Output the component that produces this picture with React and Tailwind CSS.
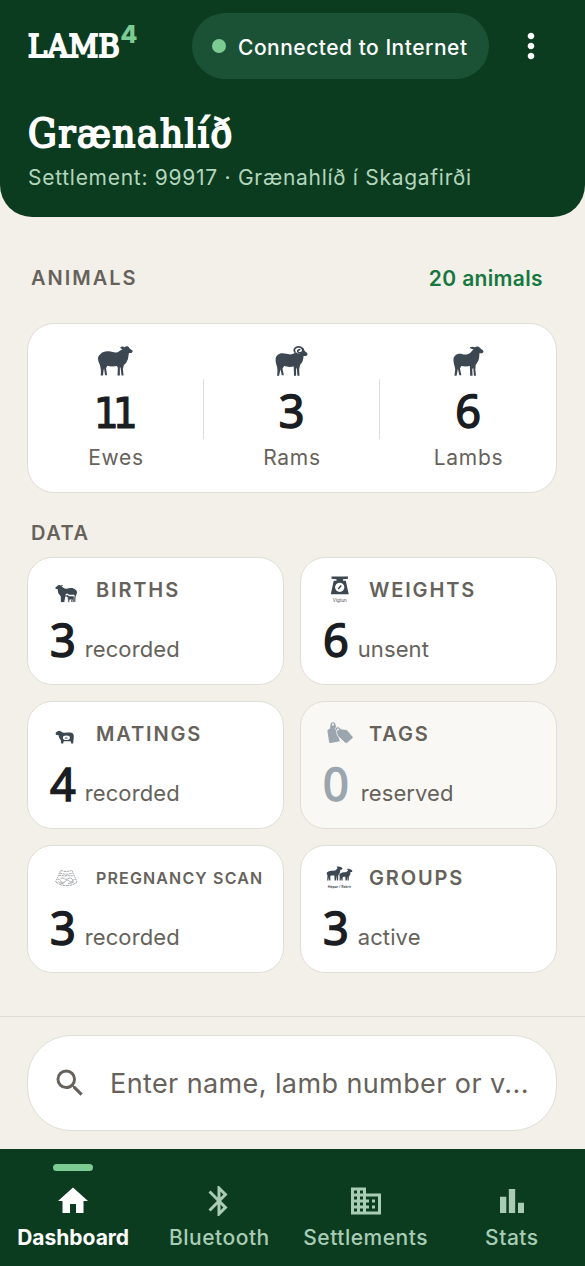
import { MdBluetooth, MdBusiness, MdHome, MdMoreVert, MdSearch } from "react-icons/md"

const serif = "font-['DejaVu_Serif_Condensed','DejaVu_Serif',serif]"
const digits = "font-['Noto_Sans',sans-serif] [-webkit-text-stroke:1.5px]"

function EweIcon({ className }) {
  return (
    <svg className={className} viewBox="0 0 104 88" fill="currentColor">
      <path d="M7 24C14 15 26 14 37 16C47 19 57 20 64 14L73 8C69 8 66 6 66 4C69 0 75 1 79 3C84-1 90 0 93 5C96 10 103 11 103 14C102 20 98 21 92 20C90 27 91 36 86 45C84 50 80 54 77 56L74 68L76 87H70L67 63H65L65 87H58L59 64L56 59C46 61 36 61 28 58L24 65L27 86H21L18 66C16 72 16 78 15 87H8C9 77 9 69 7 61C6 53 0 46 0 37C0 31 3 27 7 24Z" />
    </svg>
  )
}

function RamIcon({ className }) {
  return (
    <svg className={className} viewBox="0 0 97 88" fill="currentColor">
      <path d="M7 27C14 20 24 20 33 23C41 25 50 26 59 20L72 6H83L87 14C90 18 96 21 96 24C94 29 90 30 84 29C83 39 82 47 74 55L71 68L72 87H66L64 63L62 68V87H56L55 60C46 62 36 62 27 59L22 66L26 86H20L16 68L12 87H6C8 76 7 68 6 61C4 53 1 47 2 38C2 33 4 30 7 27Z" />
      <circle cx="70" cy="13" r="9" fill="white" />
      <path d="M59 19C53 9 60 2.500 70 2.500C79 2.500 84 9 82 15C79 22 69 22 67 16C66 12 71 9 74 12" fill="none" stroke="currentColor" strokeWidth="5" />
    </svg>
  )
}

function LambIcon({ className }) {
  return (
    <svg className={className} viewBox="0 0 90 88" fill="currentColor">
      <path d="M5 29C11 22 20 22 28 24C37 26 46 24 52 18L60 9C53 10 50 7 49 4C54 1 59 2 64 4C69-1 76 1 79 6C82 11 89 12 89 16C87 22 83 22 77 21C77 31 76 41 71 48L66 56L65 69L67 87H61L59 64L56 68L57 87H50L49 59C40 61 31 60 24 59L20 66L24 86H18L14 67L10 87H4L6 68C5 58 0 49 1 40C1 35 2 31 5 29Z" />
    </svg>
  )
}

function BirthsIcon() {
  return (
    <svg className="h-9 w-9" viewBox="0 0 36 36">
      <svg x="7" y="13" width="22" height="17.500" viewBox="0 0 104 88" fill="#3d4752" preserveAspectRatio="none">
        <g transform="matrix(-1 0 0 1 104 0)">
          <path d="M7 24C14 15 26 14 37 16C47 19 57 20 64 14L73 8L66 4C69 0 75 1 79 3C84-1 90 0 93 5L103 14C102 20 98 21 92 20C90 27 91 36 86 45L77 56L76 87H60L56 59H28L27 86H8L7 61C6 53 0 46 0 37C0 31 3 27 7 24Z" />
        </g>
      </svg>
      <path d="M17 22.200l2.500-.8 1.500 1.300h5l1 1.500v1l-1-1.300h-5.500z" fill="white" />
      <path d="M17.600 23.800l2-1 1.300 1.200H25l1 1.300v5h-1.300l-.3-2.500h-2.700l-.3 2.500H20l-.3-4.500z" fill="#3d4752" stroke="white" strokeWidth=".5" />
    </svg>
  )
}

function WeightsIcon() {
  return (
    <svg className="h-9 w-9" viewBox="0 0 36 36">
      <path d="M10.500 4.500h16.500v2.200l-5 .6v1.500h2.800l2.900 13.400H9.800l2.900-13.400h2.800V7.300l-5-.6z" fill="#3d4752" />
      <circle cx="18.700" cy="15.300" r="4.600" fill="white" />
      <path d="m17.200 17 3-3.500" stroke="#3d4752" strokeWidth="1.500" />
      <text x="18.700" y="30.300" textAnchor="middle" fontSize="4.500" fill="#3d4752" fontFamily="Inter">Vigtun</text>
    </svg>
  )
}

function MatingsIcon() {
  return (
    <svg className="h-9 w-9" viewBox="0 0 36 36">
      <path d="M7.600 16.800l2-1.600 1.600-.4 2 .6c1.500 1.600 3.500 1.500 5.500 1.200 2.500-.4 5.500-.3 6.500 1.200 1 2 .6 4.500.2 6.500l-.2 3.200h-2l-.5-2.200h-7l-.5 2.200h-2l-.4-3.500c-1.500-1.200-2-3-2.200-4.700l-2.700-.6z" fill="#3d4752" />
      <ellipse cx="18.400" cy="21.800" rx="3.500" ry="2.300" fill="white" />
      <path d="M16.500 22.500c.5-1.500 3-1.500 3.500 0z" fill="#3d4752" />
    </svg>
  )
}

function TagsIcon() {
  return (
    <svg className="h-9 w-9" viewBox="0 0 36 36">
      <g fill="#9aa5ae">
        <path d="M9 12.500l.5-4.300a2.600 2.600 0 0 1 5 0l.8 4 3.500 13-9 1.800c-1 .2-1.500-.3-1.700-1.100L6.500 15.500c-.2-.9.2-1.500.8-2z" />
        <path d="M15 11.300c2-1.200 3.800 0 4.500 1.500l6.500 1 5.700 6.700c.6.800.5 1.400-.2 2l-5.200 4.400c-.8.600-1.700.4-2.600-.3l-7.400-7-.8-5.300c-1.200-.9-1.500-2-.5-3z" stroke="#f9f8f4" strokeWidth=".8" />
      </g>
      <circle cx="12" cy="8.600" r="1.100" fill="#f9f8f4" />
      <circle cx="17" cy="13.400" r="1" fill="#f9f8f4" />
    </svg>
  )
}

function ScanIcon() {
  return (
    <svg className="h-9 w-9" viewBox="0 0 36 36" fill="none" stroke="#8d9194" strokeWidth=".8">
      <path d="M13 10.500c3.500 1.300 7 1.300 10.500 0M12 13c4 1.600 8.500 1.600 12.500 0M11 15.500c3-1 4 1 7 .3s5 .7 7.500-.3" strokeDasharray="2.200 .7" />
      <path d="M12.500 10.500L7.500 22M24 10.500L29 22" strokeDasharray="1.500 .8" />
      <path d="M9.500 19c2.500 1.500 3.500-1.500 5.500-1s2 2 4 1 4-1.500 5 0 2.500.5 3.500 0M8 22c6 5 15.500 5 21 0" strokeDasharray="3 .6" />
      <path d="M12.500 20.500c0 2.500 4 2.500 5 .7s3-1.400 4 0 4 .5 3.500-1.200M10.500 21.500c1 1.500 3 2 5 2.200M20 23.500c2.500 0 4.500-.7 6-2" />
    </svg>
  )
}

function GroupsIcon() {
  return (
    <svg className="h-9 w-9" viewBox="0 0 36 36" fill="#3d4752">
      <path d="M7.300 11.600c2-1.500 4.700-.6 7-1L16.700 8l-1.200-1c1-.6 2-.5 2.900-.2 1.500-.4 2.200.6 3 1.700-.3 1.300-1.100 1.300-2.100 1.300-.1 2.600-.7 4.300-2 5.300l-.2 5.300h-1.300v-4.800l-.9 4.800h-1.300l-.2-4.800H10l-.8 1 .3 3.800H8.200l-.5-3.200-.3 3.200H6.200l.3-5c-1.300-1.700-1-3 .8-3.800z" />
      <path d="M20.200 13c1.500-1 3.500-.3 5.200-.9l1.800-1.900-1.200-1c1-.5 2-.4 2.700 0 1.500-.2 2 .8 2.700 1.700-.3 1.100-1 1.100-1.900 1.100 0 2.200-.5 3.700-1.600 4.500l-.2 3.900h-1.200v-3.600l-.8 3.600h-1.200l-.2-3.600h-2l-.8 1 .2 2.600h-1.200l-.5-2.400-.3 2.400h-1.200l.2-4.200c-.9-1.200-.5-2.400 1.500-3.200z" />
      <text x="18.500" y="28.300" textAnchor="middle" fontSize="3.500" fontWeight="600" fontFamily="Inter">Hópar / Rekrir</text>
    </svg>
  )
}

function StatsIcon() {
  return (
    <svg className="h-9 w-9" viewBox="0 0 24 24" fill="currentColor">
      <path d="M4 9.200h4.200V20H4zM9.900 4h4.200v16H9.900zM16 13.200h4V20h-4z" />
    </svg>
  )
}

const animals = [
  {
    label: "Ewes",
    count: "11",
    icon: <EweIcon className="h-[30px] w-[35px]" />,
    digits: "-mb-1 pl-px pr-[6px] leading-[68px] font-['DejaVu_Sans_Condensed','DejaVu_Sans',sans-serif] text-[43px] tracking-[-5.5px] [-webkit-text-stroke:1.2px]",
  },
  { label: "Rams", count: "3", icon: <RamIcon className="h-[30px] w-[33px]" />, digits: `leading-[64px] text-[45px] ${digits}` },
  { label: "Lambs", count: "6", icon: <LambIcon className="h-[30px] w-[31px]" />, digits: `leading-[64px] text-[45px] ${digits}` },
]

const cards = [
  { title: "BIRTHS", count: 3, unit: "recorded", icon: <BirthsIcon /> },
  { title: "WEIGHTS", count: 6, unit: "unsent", icon: <WeightsIcon /> },
  { title: "MATINGS", count: 4, unit: "recorded", icon: <MatingsIcon /> },
  { title: "TAGS", count: 0, unit: "reserved", icon: <TagsIcon />, muted: true },
  { title: "PREGNANCY SCAN", count: 3, unit: "recorded", icon: <ScanIcon />, small: true },
  { title: "GROUPS", count: 3, unit: "active", icon: <GroupsIcon /> },
]

const tabs = [
  { label: "Dashboard", icon: <MdHome size={36} />, active: true },
  { label: "Bluetooth", icon: <MdBluetooth size={36} /> },
  { label: "Settlements", icon: <MdBusiness size={36} /> },
  { label: "Stats", icon: <StatsIcon /> },
]

function Header() {
  return (
    <header className="h-[217px] rounded-b-[32px] bg-[#0c3c20] px-7 pt-[13px] text-white">
      <div className="flex h-[66px] items-center">
        <div className="flex w-[164px] items-start">
          <span className={`${serif} text-[32px] leading-[74px] tracking-[0.4px] [-webkit-text-stroke:2px]`}>LAMB</span>
          <span className="mt-[11px] text-[25px] font-extrabold leading-7 text-[#7bcb93]">4</span>
        </div>
        <div className="flex h-[66px] w-[297px] items-center rounded-[33px] bg-[#1b5236] pl-5">
          <span className="h-3.5 w-3.5 rounded-full bg-[#7bcb93]" />
          <span className="ml-3 whitespace-nowrap pt-1 text-[21px] font-medium tracking-[0.5px]">Connected to Internet</span>
        </div>
        <MdMoreVert size={40} className="ml-[22px]" />
      </div>
      <h1 className={`${serif} mt-[29px] text-[40px] leading-[50px] tracking-[1.5px] [-webkit-text-stroke:1.8px]`}>Grænahlíð</h1>
      <p className="mt-1.5 whitespace-nowrap text-[21px] leading-7 tracking-[0.72px] text-[#b3d6bd]">
        Settlement: 99917 · Grænahlíð í Skagafirði
      </p>
    </header>
  )
}

function DataCard({ card }) {
  return (
    <div className={`h-32 rounded-[25px] border border-[#dfddd5] pl-[21px] pt-[14px] ${card.muted ? "bg-[#f9f8f4]" : "bg-white"}`}>
      <div className="-ml-px flex h-9 items-center gap-3">
        {card.icon}
        <h3 className={`whitespace-nowrap font-semibold ${card.small ? "text-[16px] tracking-[1.15px]" : "text-[20px] tracking-[1.85px]"}`}>
          {card.title}
        </h3>
      </div>
      <div className="flex items-baseline pl-px">
        <span className={`${digits} text-[45px] leading-[64px] ${card.muted ? "mr-3 text-[#9aa5ae]" : "mr-[9px] text-[#1a1d21]"}`}>
          {card.count}
        </span>
        <span className="text-[22px] tracking-[0.1px]">{card.unit}</span>
      </div>
    </div>
  )
}

export default function App() {
  return (
    <div className="flex h-[1266px] w-[585px] flex-col overflow-hidden bg-[#f3f0e9] font-['Inter',sans-serif] text-[#66625b]">
      <Header />

      <main className="h-[799px] pl-[27px] pr-7 pt-[46px]">
        <div className="flex h-[30px] items-center justify-between pl-1 pr-[14px]">
          <h2 className="text-[20px] font-semibold tracking-[2px]">ANIMALS</h2>
          <span className="pt-0.5 text-[21px] font-semibold tracking-[0.35px] text-[#16773f]">20 animals</span>
        </div>

        <section className="mt-[30px] flex h-[170px] items-center rounded-[27px] border border-[#dfddd5] bg-white pt-0.5">
          {animals.map((a, i) => (
            <div key={a.label} className="flex flex-1 items-center">
              <div className="flex flex-1 flex-col items-center text-[#3d4752]">
                {a.icon}
                <span className={`mt-[3px] text-[#1a1d21] ${a.digits}`}>{a.count}</span>
                <span className="mt-px pl-px text-[21px] leading-7 tracking-[0.7px] text-[#66625b]">{a.label}</span>
              </div>
              {i < 2 && <div className="h-[60px] w-px bg-[#dfddd5]" />}
            </div>
          ))}
        </section>

        <h2 className="mt-[25px] pl-1 text-[20px] font-semibold leading-[30px] tracking-[1.5px]">DATA</h2>
        <section className="mt-[9px] grid grid-cols-2 gap-4">
          {cards.map((card) => (
            <DataCard key={card.title} card={card} />
          ))}
        </section>
      </main>

      <div className="h-[133px] border-t border-[#dfddd5] pl-[27px] pr-7 pt-[18px]">
        <div className="flex h-24 items-center rounded-[44px] border border-[#dfddd5] bg-white pl-6">
          <MdSearch size={36} />
          <span className="ml-[22px] whitespace-nowrap pt-0.5 text-[27px] tracking-[0.4px]">Enter name, lamb number or v...</span>
        </div>
      </div>

      <nav className="grid h-[117px] grid-cols-4 bg-[#0c3c20]">
        {tabs.map((tab) => (
          <div key={tab.label} className={`flex flex-col items-center pt-[15px] ${tab.active ? "text-white" : "text-[#a9ccb5]"}`}>
            <div className={`h-[7px] w-10 rounded-full ${tab.active ? "bg-[#7bcb93]" : ""}`} />
            <div className="mt-3">{tab.icon}</div>
            <span className={`mt-[5px] whitespace-nowrap text-[21px] leading-7 ${tab.active ? "font-bold" : "font-medium tracking-[0.5px]"}`}>{tab.label}</span>
          </div>
        ))}
      </nav>
    </div>
  )
}
